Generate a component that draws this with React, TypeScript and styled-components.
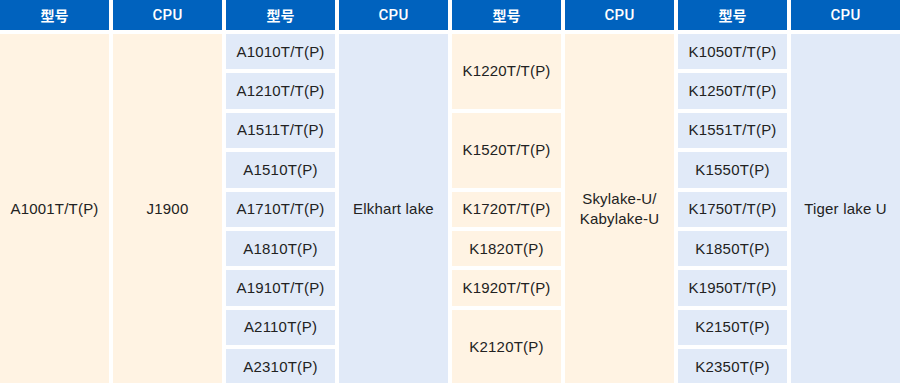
import React from "react";
import styled, { createGlobalStyle } from "styled-components";

const GlobalStyle = createGlobalStyle`
  html, body {
    margin: 0;
    padding: 0;
    background: #ffffff;
    overflow: hidden;
  }
  body {
    font-family: "Liberation Sans", "Noto Sans CJK SC", Arial, sans-serif;
  }
`;

type Tone = "head" | "warm" | "cool";

const Table = styled.div`
  display: grid;
  width: 900px;
  grid-template-columns: repeat(8, 1fr);
  grid-template-rows: 30px repeat(9, 35.375px);
  gap: 4px;
`;

const Cell = styled.div<{ $tone: Tone; $col: number; $row: number; $span: number }>`
  grid-column: ${(p) => p.$col};
  grid-row: ${(p) => p.$row} / span ${(p) => p.$span};
  display: flex;
  align-items: center;
  justify-content: center;
  text-align: center;
  background: ${(p) =>
    p.$tone === "head" ? "#0062be" : p.$tone === "warm" ? "#fff3e3" : "#e1eaf8"};
  color: ${(p) => (p.$tone === "head" ? "#ffffff" : "#222222")};
  font-family: ${(p) =>
    p.$tone === "head"
      ? `Roboto, "Noto Sans CJK SC", sans-serif`
      : `"Liberation Sans", "Noto Sans CJK SC", sans-serif`};
  font-size: 15px;
  letter-spacing: ${(p) => (p.$tone === "head" ? "0.3px" : "0.2px")};
  font-weight: ${(p) => (p.$tone === "head" ? 500 : 400)};
  line-height: 20px;
  white-space: pre-line;
`;

const HeadCjk = styled.span`
  font-family: "Noto Sans CJK SC", sans-serif;
  font-size: 14px;
  font-weight: 700;
  letter-spacing: 0;
`;

type Item = { text: string; span: number };
type Column = { head: string; tone: Tone; items: Item[] };

const one = (text: string): Item => ({ text, span: 1 });

const columns: Column[] = [
  { head: "型号", tone: "warm", items: [{ text: "A1001T/T(P)", span: 9 }] },
  { head: "CPU", tone: "warm", items: [{ text: "J1900", span: 9 }] },
  {
    head: "型号",
    tone: "cool",
    items: [
      "A1010T/T(P)",
      "A1210T/T(P)",
      "A1511T/T(P)",
      "A1510T(P)",
      "A1710T/T(P)",
      "A1810T(P)",
      "A1910T/T(P)",
      "A2110T(P)",
      "A2310T(P)",
    ].map(one),
  },
  { head: "CPU", tone: "cool", items: [{ text: "Elkhart lake", span: 9 }] },
  {
    head: "型号",
    tone: "warm",
    items: [
      { text: "K1220T/T(P)", span: 2 },
      { text: "K1520T/T(P)", span: 2 },
      one("K1720T/T(P)"),
      one("K1820T(P)"),
      one("K1920T/T(P)"),
      { text: "K2120T(P)", span: 2 },
    ],
  },
  { head: "CPU", tone: "warm", items: [{ text: "Skylake-U/\nKabylake-U", span: 9 }] },
  {
    head: "型号",
    tone: "cool",
    items: [
      "K1050T/T(P)",
      "K1250T/T(P)",
      "K1551T/T(P)",
      "K1550T(P)",
      "K1750T/T(P)",
      "K1850T(P)",
      "K1950T/T(P)",
      "K2150T(P)",
      "K2350T(P)",
    ].map(one),
  },
  { head: "CPU", tone: "cool", items: [{ text: "Tiger lake U", span: 9 }] },
];

export default function App() {
  return (
    <>
      <GlobalStyle />
      <Table>
        {columns.map((c, ci) => (
          <Cell key={`h${ci}`} $tone="head" $col={ci + 1} $row={1} $span={1}>
            {c.head === "型号" ? <HeadCjk>{c.head}</HeadCjk> : c.head}
          </Cell>
        ))}
        {columns.map((c, ci) => {
          let row = 2;
          return c.items.map((it, ii) => {
            const r = row;
            row += it.span;
            return (
              <Cell key={`c${ci}-${ii}`} $tone={c.tone} $col={ci + 1} $row={r} $span={it.span}>
                {it.text}
              </Cell>
            );
          });
        })}
      </Table>
    </>
  );
}
